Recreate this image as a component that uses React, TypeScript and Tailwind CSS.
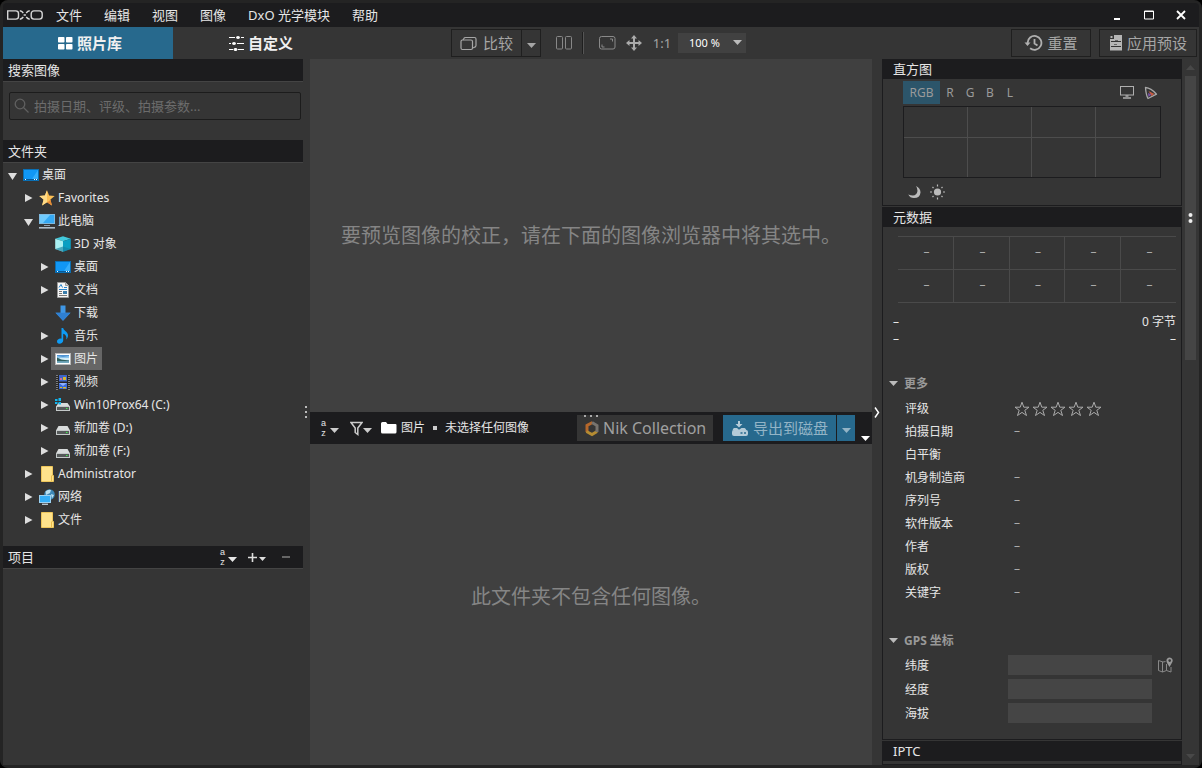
import React from 'react'
import type { ReactNode } from 'react'

function Down({ className = '' }: { className?: string }) {
  return (
    <svg width="9" height="5" viewBox="0 0 9 5" className={`shrink-0 ${className}`} fill="currentColor" aria-hidden="true">
      <path d="M0 0h9L4.5 5z" />
    </svg>
  )
}

function Logo() {
  return (
    <svg width="36" height="10" viewBox="0 0 36 10" className="shrink-0" fill="none" stroke="#d6d6d6" strokeWidth="1.4" role="img" aria-label="DxO">
      <path d="M.7.9h8q2.8 0 2.8 2.6v3Q11.500 9.100 8.700 9.100H.7z" />
      <path d="M12.800.8q2 .2 3.500 2.200M22.700.8q-2 .2-3.500 2.200M12.800 9.200q2-.2 3.500-2.200M22.700 9.200q-2-.2-3.500-2.200M16.600 5h2.300" />
      <rect x="24.200" y=".9" width="11" height="8.200" rx="2.800" />
    </svg>
  )
}

const DesktopIcon = () => (
  <svg width="16" height="16" viewBox="0 0 16 16" aria-hidden="true">
    <rect x=".5" y="2.500" width="15" height="11" fill="#1197f5" stroke="#0a6fb4" />
    <path d="M15 3v9L9 12z" fill="#35aefb" />
    <path d="M1 12.500h14" stroke="#075a98" />
    <path d="M2 12.500h1M11 12.500h1M13 12.500h1" stroke="#fff" />
  </svg>
)
const StarIcon = () => (
  <svg width="16" height="16" viewBox="0 0 16 16" aria-hidden="true">
    <path d="M8 .3l2.100 5.200 5.600.4-4.300 3.600 1.500 6L8 12.300l-4.900 3.200 1.500-6L.3 5.900l5.600-.4z" fill="#fbbf55" />
    <path d="M8 .3v12L3.100 15.500l1.500-6L.3 5.900l5.600-.4z" fill="#ffdb86" />
    <path d="M11.400 9.500l1.500 6L8 12.300l2-1z" fill="#e88a34" />
  </svg>
)
const ComputerIcon = () => (
  <svg width="16" height="16" viewBox="0 0 16 16" aria-hidden="true">
    <rect x=".5" y="1.500" width="15" height="9" fill="#35a9f3" stroke="#7fb9de" />
    <path d="M1 2h10L4 10H1z" fill="#6fcafc" />
    <path d="M5 12.500h6" stroke="#8ea2b2" />
    <path d="M0 14.800h16" stroke="#aebdc9" strokeWidth="1.600" />
  </svg>
)
const CubeIcon = () => (
  <svg width="16" height="16" viewBox="0 0 16 16" aria-hidden="true">
    <path d="M8 .3l7.800 2.500L8 5.200.2 2.800z" fill="#42c9dc" />
    <path d="M.2 2.800L8 5.200v10.500L.2 13z" fill="#a9f0f2" />
    <path d="M15.800 2.800L8 5.200v10.500l7.800-2.700z" fill="#0a9fc2" />
    <path d="M.2 13L8 10.500l7.800 2.500L8 15.700z" fill="#16819f" opacity=".65" />
  </svg>
)
const DocIcon = () => (
  <svg width="16" height="16" viewBox="0 0 16 16" aria-hidden="true">
    <path d="M2.500.5h8l3 3v12h-11z" fill="#f6f6f6" stroke="#9a9a9a" />
    <path d="M10.500.5v3h3" fill="#ccc" stroke="#9a9a9a" />
    <path d="M4 5.500l2-3 1.500 3M9 5.500h3M4 7.500h8" stroke="#2783cc" fill="none" />
    <path d="M4 9.500h3M4 11.500h3M4 13.500h8" stroke="#777" />
    <rect x="8" y="9" width="4" height="3" fill="#3a7dab" />
  </svg>
)
const DownloadIcon = () => (
  <svg width="16" height="16" viewBox="0 0 16 16" aria-hidden="true">
    <path d="M5.500.5h5v7.300h5L8 15.700.5 7.800h5z" fill="#3f97e6" />
    <path d="M.5 7.800h15L8 15.700z" fill="#2f80d2" />
  </svg>
)
const MusicIcon = () => (
  <svg width="16" height="16" viewBox="0 0 16 16" aria-hidden="true">
    <path d="M6.500 0h1.700c.3 3 4.600 3.500 4.800 7.200 0 2-.8 3.300-1.800 4.300.8-2.800-.3-5-3-5.800v6.800c0 2-1.800 3.200-3.700 3.200S2 14.700 2 13.500c0-1.700 2-3.300 4.500-2.800z" fill="#0e9bf4" />
  </svg>
)
const PictureIcon = () => (
  <svg width="16" height="16" viewBox="0 0 16 16" aria-hidden="true">
    <rect x=".5" y="2.500" width="15" height="11" fill="#fff" stroke="#b8b8b8" />
    <path d="M2 4h12v8H2z" fill="#8cc6ee" />
    <path d="M2 4h12v1L8 6 2 5z" fill="#4f93d2" />
    <path d="M4 7h10v2H7z" fill="#d3ecf7" />
    <path d="M2 6.500l4 2 8 1v1H2z" fill="#2f5f5c" />
    <path d="M2 10.500h12V12H2z" fill="#73a9bd" />
  </svg>
)
const VideoIcon = () => (
  <svg width="16" height="16" viewBox="0 0 16 16" aria-hidden="true">
    <path d="M1 1h14v14H1z" fill="#262626" />
    <path d="M2 1v15M14 1v15" stroke="#9b9b9b" strokeWidth="1.500" strokeDasharray="1 1" />
    <rect x="4" y="1" width="8" height="6.500" fill="#3e65c9" />
    <rect x="4" y="9" width="8" height="6" fill="#396bdb" />
    <path d="M8 3h3v3H8zM5 13h2v1H5zM8 13h3v1.500H8z" fill="#d8b72e" />
    <path d="M5 4h2v2H5z" fill="#c96b9b" />
    <path d="M4 9l4 3 4-3" fill="#8fb1ff" />
  </svg>
)
const DriveIcon = () => (
  <svg width="16" height="16" viewBox="0 0 16 16" aria-hidden="true">
    <path d="M3.500 6h9L15 10.500H1z" fill="#d9dcdc" />
    <rect x="1.500" y="10.500" width="13" height="4" fill="#565a5a" stroke="#c4c9c9" />
    <path d="M11 12.500h1.500" stroke="#3bf14a" strokeWidth="1.200" />
  </svg>
)
const SystemDriveIcon = () => (
  <svg width="16" height="16" viewBox="0 0 16 16" aria-hidden="true">
    <path d="M3.500 6h9L15 9.500H1z" fill="#d9dcdc" />
    <rect x="1.500" y="9.500" width="13" height="4" fill="#565a5a" stroke="#c4c9c9" />
    <path d="M11 11.500h1.500" stroke="#3bf14a" strokeWidth="1.200" />
    <path d="M0 2h2.500v2H0zM3.500 1H6v3H3.500zM0 5h2.500v2H0zM3.500 5H6v2.500H3.500z" fill="#12b6ef" />
  </svg>
)
const FolderIcon = () => (
  <svg width="16" height="16" viewBox="0 0 16 16" aria-hidden="true">
    <path d="M2.500 .500h11V9.500h1v6h-12z" fill="#ffe38c" stroke="#eec65b" />
    <path d="M12.500 15V9.500" stroke="#e9bc4c" />
  </svg>
)
const NetworkIcon = () => (
  <svg width="16" height="16" viewBox="0 0 16 16" aria-hidden="true">
    <circle cx="10.500" cy="5.500" r="5.300" fill="#3c87b7" />
    <path d="M6.500 2.500Q9-.2 12 1l-1 3-4 2zM12 5l3 1-2 3.500z" fill="#b9dff0" />
    <rect x=".5" y="6.500" width="11" height="7" fill="#35aef6" stroke="#9bd1f2" />
    <path d="M3 15.300h6" stroke="#b5c4cf" strokeWidth="1.400" />
  </svg>
)

type Node = { level: 0 | 1 | 2; label: string; icon: ReactNode; state: 'open' | 'closed' | 'leaf'; selected?: boolean }

const tree: Node[] = [
  { level: 0, label: '桌面', icon: <DesktopIcon />, state: 'open' },
  { level: 1, label: 'Favorites', icon: <StarIcon />, state: 'closed' },
  { level: 1, label: '此电脑', icon: <ComputerIcon />, state: 'open' },
  { level: 2, label: '3D 对象', icon: <CubeIcon />, state: 'leaf' },
  { level: 2, label: '桌面', icon: <DesktopIcon />, state: 'closed' },
  { level: 2, label: '文档', icon: <DocIcon />, state: 'closed' },
  { level: 2, label: '下载', icon: <DownloadIcon />, state: 'leaf' },
  { level: 2, label: '音乐', icon: <MusicIcon />, state: 'closed' },
  { level: 2, label: '图片', icon: <PictureIcon />, state: 'closed', selected: true },
  { level: 2, label: '视频', icon: <VideoIcon />, state: 'closed' },
  { level: 2, label: 'Win10Prox64 (C:)', icon: <SystemDriveIcon />, state: 'closed' },
  { level: 2, label: '新加卷 (D:)', icon: <DriveIcon />, state: 'closed' },
  { level: 2, label: '新加卷 (F:)', icon: <DriveIcon />, state: 'closed' },
  { level: 1, label: 'Administrator', icon: <FolderIcon />, state: 'closed' },
  { level: 1, label: '网络', icon: <NetworkIcon />, state: 'closed' },
  { level: 1, label: '文件', icon: <FolderIcon />, state: 'closed' },
]

const indent = { 0: 'pl-0', 1: 'pl-4', 2: 'pl-8' }

function TreeRow({ node }: { node: Node }) {
  return (
    <li className={`flex h-[23px] items-center ${indent[node.level]}`}>
      <svg width="16" height="16" viewBox="0 0 16 16" className="shrink-0" fill="#dedede" aria-hidden="true">
        {node.state === 'open' && <path d="M5 6h9l-4.500 7z" />}
        {node.state === 'closed' && <path d="M6 4l7.500 4L6 12z" />}
      </svg>
      <button className={`flex h-[23px] items-center gap-[3px] px-1 whitespace-nowrap ${node.selected ? 'bg-[#666]' : ''}`}>
        {node.icon}
        {node.label}
      </button>
    </li>
  )
}

function SideHeader({ title, children }: { title: string; children?: ReactNode }) {
  return (
    <div className="flex h-[23px] shrink-0 items-center border-b border-[#444] bg-[#1c1c1e] px-[5px] text-[13px]">
      <h2 className="flex-1 pt-[2px]">{title}</h2>
      {children}
    </div>
  )
}

function AZ() {
  return (
    <span className="flex flex-col font-['Liberation_Sans',sans-serif] text-[9px] leading-[10px]">
      <span>a</span>
      <span>z</span>
    </span>
  )
}

function Panel({ title, className = '', children }: { title: string; className?: string; children?: ReactNode }) {
  return (
    <section className={`border border-t-0 border-[#1c1c1e] ${className}`}>
      <h2 className="flex h-5 items-center bg-[#1c1c1e] px-[10px] pt-[2px] text-[13px]">{title}</h2>
      {children}
    </section>
  )
}

const fields = ['拍摄日期', '白平衡', '机身制造商', '序列号', '软件版本', '作者', '版权', '关键字']
const coords = [
  { id: 'lat', label: '纬度' },
  { id: 'lon', label: '经度' },
  { id: 'alt', label: '海拔' },
]

function GroupTitle({ children }: { children: ReactNode }) {
  return (
    <h3 className="flex h-6 items-center gap-[6px] pt-px pl-[6px] font-bold text-[#999]">
      <Down className="text-[#bbb]" />
      {children}
    </h3>
  )
}

function TitleBar() {
  return (
    <header className="flex h-6 shrink-0 items-center rounded-t bg-[#1c1c1e] pl-1 text-[13px]">
      <Logo />
      <nav className="ml-[13px] flex flex-1 gap-[22px] pt-[2px] whitespace-nowrap">
        {['文件', '编辑', '视图', '图像', 'DxO 光学模块', '帮助'].map((m) => (
          <button key={m}>{m}</button>
        ))}
      </nav>
      <div className="flex">
        <button aria-label="最小化" className="grid w-8 place-items-center">
          <svg width="12" height="12" viewBox="0 0 12 12"><path d="M3 9h6v2H3z" fill="#fff" /></svg>
        </button>
        <button aria-label="最大化" className="grid w-8 place-items-center">
          <svg width="12" height="12" viewBox="0 0 12 12"><path d="M1.500 2h9v8h-9zM1 2.500h10" fill="none" stroke="#fff" /></svg>
        </button>
        <button aria-label="关闭" className="grid w-8 place-items-center">
          <svg width="12" height="12" viewBox="0 0 12 12"><path d="M2 2l8 8M10 2l-8 8" stroke="#fff" strokeWidth="1.800" /></svg>
        </button>
      </div>
      <span className="w-[2px]" />
    </header>
  )
}

function Toolbar() {
  return (
    <div className="flex h-8 shrink-0 items-center text-[#a6a6a6]">
      <div className="flex h-8 w-[448px] shrink-0 text-[15px] font-bold text-[#f0f0f0]">
        <button className="flex w-[170px] items-center justify-center gap-1 bg-[#27698d] pl-1">
          <svg width="15" height="13" viewBox="0 0 15 13" fill="#fff" aria-hidden="true">
            <rect width="6.500" height="5.500" rx=".8" /><rect x="8" width="6.500" height="5.500" rx=".8" />
            <rect y="7" width="6.500" height="5.500" rx=".8" /><rect x="8" y="7" width="6.500" height="5.500" rx=".8" />
          </svg>
          照片库
        </button>
        <button className="flex w-[176px] items-center justify-center gap-1">
          <svg width="15" height="15" viewBox="0 0 15 15" stroke="#fff" fill="#fff" aria-hidden="true">
            <path d="M0 1.500h6M12 1.500h3M0 7.500h2M8 7.500h7M0 13.500h4M9 13.500h6" />
            <rect x="7.500" y=".5" width="3" height="2" rx="1" /><rect x="3.500" y="6.500" width="3" height="2" rx="1" /><rect x="5" y="12.500" width="3" height="2" rx="1" />
          </svg>
          自定义
        </button>
      </div>
      <div className="flex h-7 shrink-0 border border-[#1f1f1f]">
        <button className="flex w-[70px] items-center justify-center gap-[6px] border-r border-[#1f1f1f] text-[15px]">
          <svg width="17" height="15" viewBox="0 0 17 15" fill="none" stroke="currentColor" strokeWidth="1.200" aria-hidden="true">
            <rect x="1" y="4" width="11.500" height="9.500" rx="1.500" />
            <path d="M3 4l1-1.800Q4.300 1.500 5.500 1.500h9Q16 1.500 16 3v6.500Q16 11 14 11.500L12.500 12" />
          </svg>
          比较
        </button>
        <button aria-label="比较选项" className="grid w-[18px] place-items-center pt-1"><Down /></button>
      </div>
      <button aria-label="并排" className="ml-[14px] shrink-0">
        <svg width="18" height="14" viewBox="0 0 18 14" fill="none" stroke="#888"><rect x="1.500" y=".5" width="6" height="12.500" rx="1" /><rect x="10.500" y=".5" width="6" height="12.500" rx="1" /></svg>
      </button>
      <span className="ml-[9px] h-[22px] w-[2px] border-r border-[#555] bg-[#1f1f1f]" />
      <button aria-label="适合屏幕" className="ml-[15px] shrink-0">
        <svg width="17" height="14" viewBox="0 0 17 14" fill="none" stroke="#8a8a8a"><rect x=".5" y=".5" width="15.500" height="12.500" rx="2" /><path d="M11 3h2.500v2.500M5.500 11H3V8.500" /></svg>
      </button>
      <button aria-label="移动" className="ml-[10px] shrink-0">
        <svg width="16" height="16" viewBox="0 0 16 16" fill="#ababab"><path d="M8 0l3 3.500H9V7h3.500V5L16 8l-3.500 3V9H9v3.500h2L8 16l-3-3.500h2V9H3.500v2L0 8l3.500-3v2H7V3.500H5z" /></svg>
      </button>
      <button className="ml-[10px] w-5 pt-px text-[13px]">1:1</button>
      <div className="relative ml-[6px] shrink-0 text-white">
        <select aria-label="缩放" className="block h-5 w-[68px] appearance-none bg-[#414141] pl-[11px] text-[11px]">
          <option>100 %</option>
        </select>
        <Down className="pointer-events-none absolute top-[7px] right-1 text-[#bbb]" />
      </div>
      <span className="flex-1" />
      <button className="flex h-7 w-20 shrink-0 items-center justify-center gap-1 border border-[#1f1f1f] text-[15px]">
        <svg width="19" height="16" viewBox="0 0 19 16" fill="none" stroke="#b0b0b0" strokeWidth="1.800" aria-hidden="true">
          <path d="M3.600 8a6.900 6.900 0 1 1 2.500 5.200M10.500 4v4.500l3 2" /><path d="M.5 7.500h6l-3 3.500z" fill="#b0b0b0" stroke="none" />
        </svg>
        重置
      </button>
      <button className="mr-[2px] ml-2 flex h-7 w-[98px] shrink-0 items-center justify-center gap-1 border border-[#1f1f1f] text-[15px]">
        <svg width="14" height="16" viewBox="0 0 14 16" aria-hidden="true">
          <path d="M5 0h8v15.500H1V4h4z" fill="#b5b5b5" /><path d="M1.500 1H3.500V3H1.500z" fill="#b5b5b5" />
          <path d="M2 6.500h10M2 11.500h10" stroke="#333" /><path d="M6 5.500h3M5 9.500h3" stroke="#666" />
        </svg>
        应用预设
      </button>
    </div>
  )
}

function LeftPanel() {
  return (
    <aside className="flex w-[300px] shrink-0 flex-col">
      <SideHeader title="搜索图像" />
      <div className="relative px-[6px] pt-[10px] pb-5 pr-[2px]">
        <svg width="16" height="16" viewBox="0 0 16 16" className="absolute top-4 left-[11px]" fill="none" stroke="#606060" strokeWidth="1.300" aria-hidden="true">
          <circle cx="6" cy="6" r="4.800" /><path d="M9.500 9.500l5 5" />
        </svg>
        <input type="search" aria-label="搜索图像" placeholder="拍摄日期、评级、拍摄参数..." className="block h-7 w-full rounded-xs border border-[#1c1c1c] bg-transparent pl-6 text-[13px] outline-none placeholder:text-[#6c6c6c]" />
      </div>
      <SideHeader title="文件夹" />
      <ul className="h-[383px] shrink-0">
        {tree.map((n, i) => <TreeRow key={i} node={n} />)}
      </ul>
      <SideHeader title="项目">
        <button aria-label="排序" className="flex items-center gap-[3px]"><AZ /><Down className="mt-1" /></button>
        <button aria-label="添加" className="ml-[10px] flex items-center gap-px">
          <svg width="11" height="11" viewBox="0 0 11 11"><path d="M5.500 1v9M1 5.500h9" stroke="#ddd" strokeWidth="1.600" /></svg>
          <svg width="7" height="4" viewBox="0 0 7 4" className="mt-1" fill="#ddd"><path d="M0 0h7L3.500 4z" /></svg>
        </button>
        <button aria-label="移除" className="mr-2 ml-4"><span className="block h-[2px] w-2 bg-[#666]" /></button>
      </SideHeader>
    </aside>
  )
}

function BrowserBar() {
  return (
    <div className="flex h-8 shrink-0 items-center bg-[#1c1c1e] pl-[11px] whitespace-nowrap text-[#e6e6e6]">
      <button aria-label="排序" className="flex items-center gap-1"><AZ /><Down className="mt-1 text-[#ccc]" /></button>
      <button aria-label="筛选" className="ml-[11px] flex items-center">
        <svg width="13" height="15" viewBox="0 0 13 15" fill="none" stroke="#ccc" strokeWidth="1.500"><path d="M1 1.500h11L7.800 7v6.500L5.200 11.500V7z" /></svg>
        <Down className="mt-1 text-[#ccc]" />
      </button>
      <svg width="16" height="12" viewBox="0 0 16 12" className="ml-[9px]" fill="#fff" aria-hidden="true"><path d="M0 1.500Q0 0 1.500 0H5l1.500 2h8Q15.500 2 15.500 3v7q0 1.500-1.500 1.500H1.500Q0 11.500 0 10z" /></svg>
      <span className="ml-1">图片</span>
      <span className="mx-2 size-1 bg-[#ccc]" />
      <span className="flex-1">未选择任何图像</span>
      <button className="relative flex h-[26px] w-[136px] items-center gap-[3px] bg-[#353535] pl-[7px] text-base text-[#a0a0a0]">
        <svg width="14" height="2" viewBox="0 0 14 2" className="absolute top-0 left-[7px]" fill="#aaa" aria-hidden="true"><path d="M0 0h2v2H0zM6 0h2v2H6zM12 0h2v2h-2z" /></svg>
        <svg width="16" height="17" viewBox="0 0 16 17" fill="none" strokeWidth="3" aria-hidden="true">
          <path d="M8.500 2.500L3 5.500v6.500" stroke="#b5672b" /><path d="M2.500 11.500L8 14.500l5-3" stroke="#b58c32" /><path d="M13 12V5.500L8 2.500" stroke="#77736e" />
        </svg>
        Nik Collection
      </button>
      <div className="ml-[10px] flex gap-px text-[15px] text-[#93b4c6]">
        <button className="flex h-[26px] w-[113px] items-center justify-center gap-1 bg-[#27698d]">
          <svg width="18" height="17" viewBox="0 0 18 17" fill="#b4cbd8" aria-hidden="true">
            <path d="M6 1h2v3h2.500L7 7.500 3.500 4H6z" transform="translate(1 0)" />
            <path d="M3 8h3l2 1.800L10.500 8h3q1.200 0 2 2.500H1.500Q2 8 3 8z" /><rect x="1" y="10" width="16" height="6" rx="2" />
            <path d="M9.500 13h2M13 13h2" stroke="#27698d" strokeWidth="1.500" />
          </svg>
          导出到磁盘
        </button>
        <button aria-label="导出选项" className="grid w-[18px] place-items-center bg-[#27698d] pt-1"><Down /></button>
      </div>
      <button aria-label="更多工具" className="mr-[2px] ml-[6px] pt-5"><Down className="text-white" /></button>
    </div>
  )
}

function Histogram() {
  return (
    <div className="h-[126px] pt-[2px] pr-5 pl-5">
      <div className="flex h-[23px] items-center text-[#9a9a9a]">
        {['RGB', 'R', 'G', 'B', 'L'].map((c, i) => (
          <button key={c} className={i === 0 ? 'h-[23px] w-[37px] bg-[#2c556a]' : 'w-5'}>{c}</button>
        ))}
        <span className="flex-1" />
        <svg width="14" height="13" viewBox="0 0 14 13" fill="none" stroke="#b0b0b0" aria-hidden="true"><rect x=".5" y=".5" width="13" height="8.500" /><path d="M5.500 10h3M3 12h8" strokeWidth="1.500" /></svg>
        <svg width="14" height="14" viewBox="0 0 14 14" className="mr-[3px] ml-[10px]" aria-hidden="true">
          <path d="M1.500 1.500Q7 2 12.500 8.200L4 12.500Q2 9 1.500 1.500z" fill="#353535" stroke="#a8a8a8" strokeWidth="1.300" strokeLinejoin="round" />
          <path d="M4.500 5l6 3-3 2z" fill="#c75d41" /><path d="M4 7l3.500 1.500L4.500 11z" fill="#7951a7" />
        </svg>
      </div>
      <svg width="258" height="72" viewBox="0 0 258 72" className="mt-[2px]" fill="none" role="img" aria-label="直方图">
        <path d="M64.500 1v70M128.500 1v70M192.500 1v70M1 31.500h256" stroke="#4d4d4d" />
        <rect x=".5" y=".5" width="257" height="71" stroke="#1c1c1e" />
      </svg>
      <div className="mt-[6px] flex items-center gap-[9px] pl-[5px]">
        <svg width="13" height="16" viewBox="0 0 13 16" fill="#bbb" aria-hidden="true"><path d="M8 2q4.500 2 4.500 6.500Q12 14 6 14 2 14 .3 10.500 8.500 13.500 9.500 7 9.500 4 8 2z" /></svg>
        <svg width="15" height="16" viewBox="0 0 15 16" aria-hidden="true"><circle cx="7.500" cy="8" r="3.600" fill="#bbb" /><path d="M7.500 .5v2M7.500 13.500v2M0 8h2M13 8h2M2.500 3l1 1M11.500 12l1 1M12.500 3l-1 1M3.500 12l-1 1" stroke="#bbb" strokeWidth="1.200" /></svg>
      </div>
    </div>
  )
}

function Metadata() {
  return (
    <div className="h-[512px] pt-[9px]">
      <table className="ml-[15px] w-[278px] table-fixed border-collapse text-center text-[#aaa]">
        <tbody>
          {[0, 1].map((r) => (
            <tr key={r} className="h-[33px] border-y border-[#4a4a4a]">
              {[0, 1, 2, 3, 4].map((c) => <td key={c} className="border-r border-[#4a4a4a] p-0 pb-[2px] pl-[2px] last:border-r-0">–</td>)}
            </tr>
          ))}
        </tbody>
      </table>
      <div className="mt-[10px] flex h-[18px] items-center justify-between pr-[5px] pl-[10px]"><span>–</span><span>0 字节</span></div>
      <div className="flex h-[18px] items-center justify-between pr-[5px] pb-[2px] pl-[10px]"><span>–</span><span>–</span></div>
      <div className="h-[22px]" />
      <GroupTitle>更多</GroupTitle>
      <dl className="mt-[2px] grid grid-cols-[109px_1fr] auto-rows-[23px] items-center pl-[22px]">
        <dt>评级</dt>
        <dd className="flex gap-[2px]">
          {[1, 2, 3, 4, 5].map((s) => (
            <button key={s} aria-label={`${s} 星`}>
              <svg width="16" height="16" viewBox="0 0 16 16" className="block" fill="none" stroke="#aaa"><path d="M8 1.200l1.800 5h5.200l-4.200 3.100 1.700 5.200L8 11.400l-4.500 3.100 1.700-5.200L1 6.200h5.200z" /></svg>
            </button>
          ))}
        </dd>
        {fields.map((f) => (
          <React.Fragment key={f}>
            <dt>{f}</dt>
            <dd className="pb-[2px] text-[#aaa]">{f === '白平衡' ? '' : '–'}</dd>
          </React.Fragment>
        ))}
      </dl>
      <div className="h-6" />
      <GroupTitle>GPS 坐标</GroupTitle>
      <div className="mt-px flex flex-col">
        {coords.map((c) => (
          <div key={c.id} className="flex h-6 items-center pl-[22px]">
            <label htmlFor={c.id} className="w-[103px] pt-[2px]">{c.label}</label>
            <input id={c.id} className="h-5 w-36 bg-[#454545] px-1 outline-none" />
            {c.id === 'lat' && (
              <button aria-label="地图" className="ml-[6px]">
                <svg width="15" height="16" viewBox="0 0 15 16" fill="none" stroke="#888"><path d="M7.500 4.500L5 5 .5 3.500v10L4.500 15l4-1.500 4.500 1.500v-5M4.500 5v10M8.500 7v6.500" /><path d="M11.500 10L8.800 5.500Q7.500 1.500 11 .5 14.800.5 14.700 4 14.500 5 11.500 10z" fill="#999" stroke="none" /><circle cx="11.700" cy="3.600" r="1.300" fill="#353535" stroke="none" /></svg>
              </button>
            )}
          </div>
        ))}
      </div>
    </div>
  )
}

export default function App() {
  return (
    <div className="h-screen min-h-[480px] bg-black font-['Noto_Sans','Noto_Sans_CJK_SC',sans-serif] text-xs text-[#e6e6e6]">
      <div className="flex h-full flex-col rounded-lg bg-[#242424] p-[3px]">
        <TitleBar />
        <div className="flex min-h-0 flex-1 flex-col bg-[#353535]">
          <Toolbar />
          <main className="flex min-h-0 flex-1">
            <LeftPanel />
            <div className="grid w-[7px] shrink-0 place-items-center pr-px">
              <svg width="2" height="14" viewBox="0 0 2 14" fill="#bbb" aria-hidden="true"><path d="M0 1h2v2H0zM0 6h2v2H0zM0 11h2v2H0z" /></svg>
            </div>
            <div className="flex min-w-0 flex-1 flex-col bg-[#404040] text-[#858585]">
              <div className="flex grow-[353] basis-0 items-center justify-center text-xl"><p>要预览图像的校正，请在下面的图像浏览器中将其选中。</p></div>
              <BrowserBar />
              <div className="flex grow-[321] basis-0 items-center justify-center text-xl"><p className="pb-4">此文件夹不包含任何图像。</p></div>
            </div>
            <button aria-label="折叠面板" className="grid w-[10px] shrink-0 place-items-center">
              <svg width="6" height="11" viewBox="0 0 6 11" fill="none" stroke="#fff" strokeWidth="1.500"><path d="M1 .5l3.500 5L1 10.500" /></svg>
            </button>
            <aside className="flex w-[300px] shrink-0 flex-col overflow-hidden">
              <Panel title="直方图" className="shrink-0"><Histogram /></Panel>
              <Panel title="元数据" className="mt-px shrink-0"><Metadata /></Panel>
              <Panel title="IPTC" className="mt-px flex-1" />
            </aside>
            <div className="flex w-[17px] shrink-0 flex-col items-center py-[6px] text-[#484848]">
              <Down className="rotate-180" />
              <div className="mt-[6px] mb-auto flex h-[284px] w-[11px] items-center justify-center bg-[#454545]">
                <svg width="5" height="12" viewBox="0 0 5 12" fill="#eee" aria-hidden="true"><circle cx="2.500" cy="3" r="2" /><circle cx="2.500" cy="9" r="2" /></svg>
              </div>
              <Down />
            </div>
          </main>
        </div>
      </div>
    </div>
  )
}
